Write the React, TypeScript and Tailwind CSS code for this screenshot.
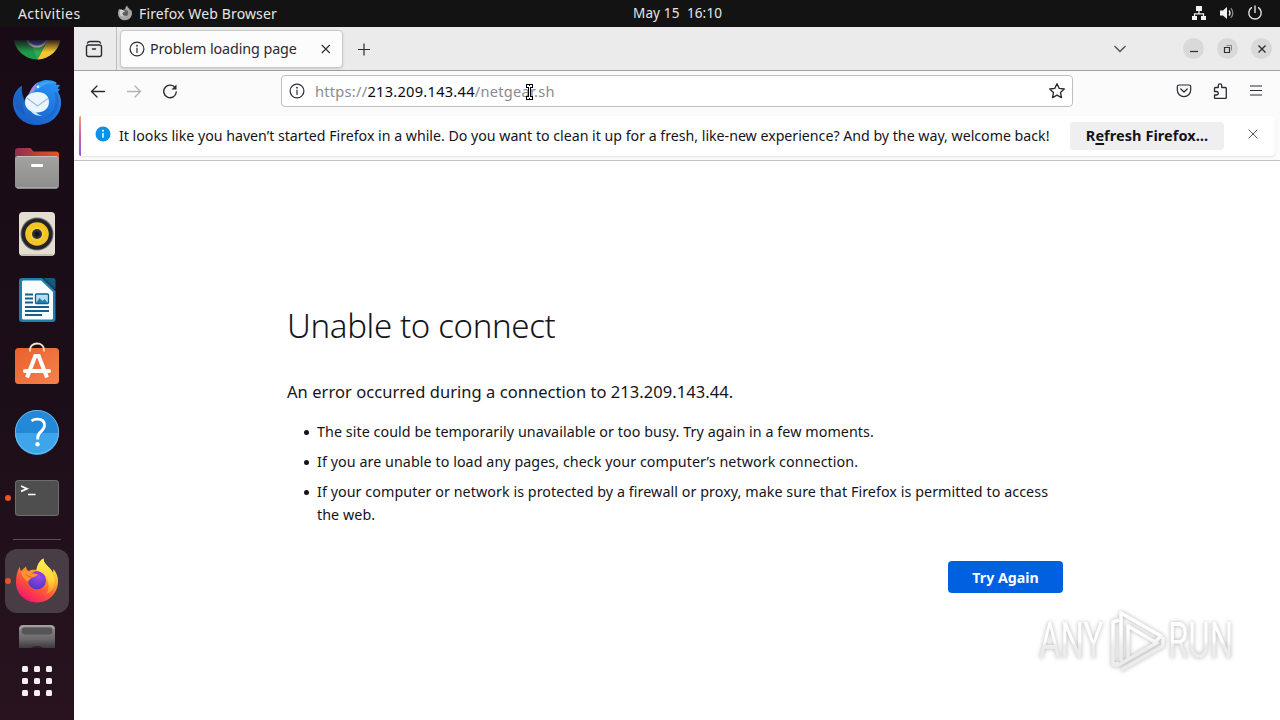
import type { ReactNode } from "react";

interface DockItemProps {
  children: ReactNode;
  running?: boolean;
}

function DockItem({ children, running = false }: DockItemProps) {
  return (
    <div className="relative flex h-[66px] w-full shrink-0 items-center justify-center">
      {running && <span className="absolute top-[30px] left-[5px] h-1.5 w-1.5 rounded-full bg-[#e95420]" />}
      {children}
    </div>
  );
}

function ChromeIcon() {
  return (
    <svg width="48" height="20" viewBox="0 28 48 20">
      <defs>
        <linearGradient id="chromeFade" x1="0" y1="28" x2="0" y2="40" gradientUnits="userSpaceOnUse">
          <stop offset="0" stopColor="#1a0c17" stopOpacity="0.9" />
          <stop offset="1" stopColor="#1a0c17" stopOpacity="0" />
        </linearGradient>
      </defs>
      <circle cx="24" cy="24" r="23.5" fill="#1f9a4a" />
      <path d="M34 30 24.5 47.5A23.5 23.5 0 0 0 47.5 24L24 13z" fill="#f5c631" />
      <path d="M33.500 29.500 24.5 47.500 19 34z" fill="#35a853" />
      <circle cx="24" cy="24" r="11.500" fill="#e8eaf2" />
      <circle cx="24" cy="24" r="9.500" fill="#3a6fd0" />
      <rect y="28" width="48" height="12" fill="url(#chromeFade)" />
    </svg>
  );
}

function ThunderbirdIcon() {
  return (
    <svg width="48" height="48" viewBox="0 0 48 48">
      <defs>
        <linearGradient id="tbBody" x1="0.8" y1="0" x2="0.3" y2="1">
          <stop offset="0" stopColor="#2b93f5" />
          <stop offset="0.5" stopColor="#1f78e0" />
          <stop offset="1" stopColor="#1a5fc4" />
        </linearGradient>
      </defs>
      <path d="M9 8C4.500 9.500 0 17 0 24c0 13 10 23 23.500 23C38 47 48 37.500 48 24.500c0-4-1-7.500-3-10.500l2-3-2.500-.3L47 7l-4-.5.500-2C39 2 34 1.500 30 2.500 24 4 20 8 17.500 13c-2 4-5.500 6-6 10C9 18 8 13 9 8z" fill="url(#tbBody)" />
      <path d="M9 8c0 5 1 9 2.500 13-2 5-2 11 1 16C5 34 1 28 1 22 2 16 5 10.500 9 8z" fill="#1853b0" opacity="0.5" />
      <path d="M20 13c3-6 8-9.500 14-9.500 4 0 7 .5 9.500 1.800-5-.8-9 0-12.500 2-3.500 2.200-6 5-11 5.700z" fill="#53b4ff" opacity="0.55" />
      <path d="M16 16c2-6 5-9.500 9.500-12-3 4.500-4 7-4.500 9.500z" fill="#c58be8" opacity="0.8" />
      <circle cx="25" cy="8.800" r="1.300" fill="#e8f6ff" />
      <path d="M12 24.500C12 18 17.500 14 24.500 14S36 18 36 24c0 6.500-5.500 10.500-12 10.500S12 30.500 12 24.500z" fill="#eaf6ff" />
      <path d="M23 34c1 2 3 3 6 3.500-5 1-10-1.500-12-6z" fill="#d4ebfd" />
      <path d="m14 20 10.500 8 10.500-7.500" fill="none" stroke="#a4bdd2" strokeWidth="1.400" />
      <path d="M41 14c4 10 0 21-10 27 13-3 18-15 13-26z" fill="#1658bc" opacity="0.4" />
    </svg>
  );
}

function FilesIcon() {
  return (
    <svg width="48" height="48" viewBox="0 0 48 48">
      <defs>
        <linearGradient id="folderBack" x1="0" x2="1">
          <stop offset="0" stopColor="#8e2e50" />
          <stop offset="1" stopColor="#e95420" />
        </linearGradient>
        <linearGradient id="folderFront" x1="0" y1="0" x2="0" y2="1">
          <stop offset="0" stopColor="#a3a3a1" />
          <stop offset="1" stopColor="#8d8d8b" />
        </linearGradient>
      </defs>
      <path d="M5 4h12.500l3 3.500H43a3 3 0 0 1 3 3V24H2V7a3 3 0 0 1 3-3z" fill="url(#folderBack)" />
      <rect x="2" y="12" width="44" height="32.500" rx="3" fill="url(#folderFront)" />
      <path d="M4 12.500h40M4 44h40" stroke="#c2c2c0" />
      <rect x="18" y="20" width="12" height="3" rx="1" fill="#fff" />
    </svg>
  );
}

function RhythmboxIcon() {
  return (
    <svg width="48" height="48" viewBox="0 0 48 48">
      <rect x="6" y="2" width="36" height="44" rx="4" fill="#e3ddd2" />
      <path d="M8 45h32" stroke="#bdb6a8" strokeWidth="1.500" />
      <circle cx="24" cy="24" r="16.500" fill="#77736d" />
      <circle cx="24" cy="24" r="15.500" fill="#23242a" />
      <circle cx="24" cy="24" r="11.800" fill="#f3c422" />
      <circle cx="24" cy="24" r="7" fill="#f7cf3c" />
      <circle cx="24" cy="24" r="5" fill="#2e3038" />
      <circle cx="24" cy="24" r="2.500" fill="#15161b" />
    </svg>
  );
}

function WriterIcon() {
  return (
    <svg width="48" height="48" viewBox="0 0 48 48">
      <path d="M9 2h20l13.500 13v28a3 3 0 0 1-3 3H9a3 3 0 0 1-3-3V5a3 3 0 0 1 3-3z" fill="#1e7fae" />
      <path d="M30 2h10a2.500 2.500 0 0 1 2.500 2.500V13z" fill="#155a84" />
      <path d="M31 2.500 42 13" stroke="#12496b" strokeWidth="1.500" />
      <path d="M10 4.500h18l12 11.500v26a1.500 1.500 0 0 1-1.500 1.500h-28A1.500 1.500 0 0 1 9 42V6a1.500 1.500 0 0 1 1-1.500z" fill="#fafdff" />
      <path d="M12 18.500h8M12 22.500h8M12 26.500h8M12 31h24M12 35h24M12 39h17" stroke="#155f8c" strokeWidth="1.800" />
      <rect x="22.500" y="18" width="13" height="9.500" rx="1" fill="#b8dcf2" stroke="#155f8c" strokeWidth="1.300" />
      <path d="m23 27 3.500-5 3 3 2-2 3.500 4z" fill="#1e7fae" />
    </svg>
  );
}

function SoftwareIcon() {
  return (
    <svg width="48" height="48" viewBox="0 0 48 48">
      <defs>
        <linearGradient id="bag" x1="0" y1="0" x2="1" y2="1">
          <stop offset="0" stopColor="#e9602c" />
          <stop offset="1" stopColor="#f4834f" />
        </linearGradient>
      </defs>
      <rect x="2" y="6" width="44" height="36" rx="3.500" fill="url(#bag)" />
      <path d="M17 9.500V8c0-4 3-6.500 7-6.500S31 4 31 8v1.500" fill="none" stroke="#f5e1d0" strokeWidth="1.800" />
      <path d="M22.500 13.500 14 35.500M25.500 13.500 34 35.500" stroke="#fff" strokeWidth="4" />
      <path d="M12 29h24" stroke="#fff" strokeWidth="4" strokeLinecap="round" />
      <path d="M21 12h6l1 3h-8z" fill="#fff" />
    </svg>
  );
}

function HelpIcon() {
  return (
    <svg width="48" height="48" viewBox="0 0 48 48">
      <circle cx="24" cy="24" r="22" fill="#2488d8" />
      <path d="M2 25a22 22 0 0 0 44 0z" fill="#3fa5ea" />
      <circle cx="24" cy="24" r="21.600" fill="none" stroke="#7cc2f0" strokeWidth="0.8" />
      <path d="M18.500 12.800c1.500-1 3.500-1.600 5.800-1.600 4.500 0 7.200 2.300 7.200 6 0 3-1.600 4.700-3.800 6.700-2.300 2-3 3.200-3 6v1.600" fill="none" stroke="#fff" strokeWidth="2.800" />
      <circle cx="24.500" cy="36.300" r="2.200" fill="#fff" />
    </svg>
  );
}

function TerminalIcon() {
  return (
    <svg width="48" height="48" viewBox="0 0 48 48">
      <rect x="2" y="6" width="44" height="36" rx="3.500" fill="#4e4e4e" />
      <rect x="2.500" y="6.500" width="43" height="35" rx="3" fill="none" stroke="#6d6d6d" />
      <path d="m8 12 6 2.700-6 2.700M15 20.500h7.500" fill="none" stroke="#fff" strokeWidth="1.700" />
    </svg>
  );
}

function FirefoxIcon() {
  return (
    <svg width="48" height="48" viewBox="0 0 48 48">
      <defs>
        <linearGradient id="fxFlame" x1="0.85" y1="0.1" x2="0.3" y2="1">
          <stop offset="0" stopColor="#fff14a" />
          <stop offset="0.35" stopColor="#ffa32e" />
          <stop offset="0.6" stopColor="#ff5a36" />
          <stop offset="1" stopColor="#f5156c" />
        </linearGradient>
        <linearGradient id="fxTail" x1="0" y1="0" x2="0" y2="1">
          <stop offset="0" stopColor="#fff250" />
          <stop offset="0.6" stopColor="#ffd33c" />
          <stop offset="1" stopColor="#ff8a2b" />
        </linearGradient>
        <radialGradient id="fxGlobe" cx="0.6" cy="0.2" r="0.8">
          <stop offset="0" stopColor="#a14cf0" />
          <stop offset="1" stopColor="#5136c4" />
        </radialGradient>
      </defs>
      <path d="M7 9.500c0 2 .3 3.500 1 4.500L13 9.500c.2 2 1 3.500 2.500 4.500 3-1.500 5-1.500 8-1C24.500 7 27 3.500 30.500 1.500c0 5 4 7 6.500 10 1.500 1.500 2.500 3 3 4.500l.5-4c3 4 5 8.500 4.500 13C44.500 37 35.500 45.500 24 45.500S3 37 3 25.500C3 19 4 14 7 9.500z" fill="url(#fxFlame)" />
      <path d="M23.500 13C24.500 7 27 3.500 30.500 1.500c0 5 4 7 6.500 10 4 5 6 12 4 18-1.500 3.500-4 6-7.500 7.500 3-5 3-12-.5-16.500-2-2.700-6.500-3.500-9.500-7.500z" fill="url(#fxTail)" />
      <circle cx="24" cy="23.500" r="9" fill="url(#fxGlobe)" />
      <path d="M21 14.500c4-1 9 .5 12 6l-3-1.500 1 2.500c-3-3.500-6-4-10-4z" fill="#8c3fe0" />
      <path d="M8 14.500c4-1.500 8-.5 11 2 2 0 4.500.2 6 .8-1.500 2.200-3.500 2.700-5.500 3.200-1.500 1-3.500 2-4.500 4-3-1-6-5-7-10z" fill="#ff9233" />
      <path d="M12 16.500c3 2.500 6 3.500 9 3.800l-1.500.7c-3-.2-6-1.500-7.500-4.500z" fill="#ff5a36" />
    </svg>
  );
}

function DriveIcon() {
  return (
    <svg width="48" height="23" viewBox="0 0 48 23">
      <defs>
        <linearGradient id="drive" x1="0" y1="0" x2="0" y2="1">
          <stop offset="0" stopColor="#8f8f8f" />
          <stop offset="0.6" stopColor="#6c6a6c" />
          <stop offset="1" stopColor="#3d383c" />
        </linearGradient>
      </defs>
      <path d="M6 23V4a4 4 0 0 1 4-4h28a4 4 0 0 1 4 4v19z" fill="url(#drive)" />
      <path d="M7 4a3.500 3.500 0 0 1 3-3h28a3.500 3.500 0 0 1 3 3" fill="none" stroke="#b3b3b3" />
      <rect x="8.500" y="2.500" width="31" height="7" rx="3.500" fill="#555" />
      <path d="M18 23c1.500-2.800 10.500-2.800 12 0z" fill="#29242a" />
    </svg>
  );
}

function Dock() {
  return (
    <aside className="flex w-[74px] shrink-0 flex-col items-center bg-linear-to-b from-[#190b16] via-[#1b0e18] to-[#28131f] pt-[13px]">
      <div className="h-[29px] shrink-0">
        <ChromeIcon />
      </div>
      <DockItem><ThunderbirdIcon /></DockItem>
      <DockItem><FilesIcon /></DockItem>
      <DockItem><RhythmboxIcon /></DockItem>
      <DockItem><WriterIcon /></DockItem>
      <DockItem><SoftwareIcon /></DockItem>
      <DockItem><HelpIcon /></DockItem>
      <DockItem running><TerminalIcon /></DockItem>
      <div className="mt-2 mb-[9px] h-px w-12 shrink-0 bg-[#5a5058]" />
      <div className="relative flex h-16 w-16 shrink-0 items-center justify-center rounded-xl bg-[#483c45]">
        <span className="absolute top-[29px] left-0 h-1.5 w-1.5 rounded-full bg-[#e95420]" />
        <FirefoxIcon />
      </div>
      <div className="mt-3 h-[23px] shrink-0">
        <DriveIcon />
      </div>
      <div className="mt-[18px] grid grid-cols-3 gap-1.5">
        {[...Array(9)].map((_, i) => (
          <span key={i} className="h-1.5 w-1.5 rounded-[1.5px] bg-[#f5eef3]" />
        ))}
      </div>
    </aside>
  );
}

function InfoIcon() {
  return (
    <svg width="16" height="16" viewBox="0 0 16 16" fill="none" stroke="currentColor" strokeWidth="1.200">
      <circle cx="8" cy="8" r="6.900" />
      <path d="M8 7v4.500" strokeLinecap="round" />
      <circle cx="8" cy="4.700" r="0.900" fill="currentColor" stroke="none" />
    </svg>
  );
}

function TopBar() {
  return (
    <header className="flex h-[27px] items-center bg-[#131313] text-[13.500px] text-[#e6e6e6]">
      <span className="w-[100px] shrink-0 pb-px pl-[18px] text-[14px] tracking-[0.42px]">Activities</span>
      <div className="flex w-[533px] shrink-0 items-center pb-px pl-[17px]">
        <svg width="16" height="16" viewBox="0 0 48 48" className="mr-[6px]">
          <path d="M7.500 10.500 9 15l4-4 2.500 4.500c3-2 6-2.500 9-2C24.500 8 27 4 30.500 1.500c0 5 4 7 6.500 10l3 5 1-4c3 4 4.500 9 4 14C44 37.500 35 46 24 46 12 46 3 37 3 25.500c0-6 1.500-11 4.500-15z" fill="#a5a5a5" />
          <circle cx="25" cy="24" r="9" fill="#5f5f5f" />
          <path d="M9 15c4-2 8-1 11 2l6 1-6 3-4.500 4c.5 4.500 4.500 8 9 8-6 3-14 0-16-7z" fill="#cfcfcf" />
        </svg>
        <span className="text-[14px] tracking-[0.130px]">Firefox Web Browser</span>
      </div>
      <span className="tracking-[0.150px] whitespace-pre">May 15  16:10</span>
      <div className="ml-auto flex items-center gap-3 pr-[17.500px] pb-px">
        <svg width="16" height="16" viewBox="0 0 16 16" fill="#f2f2f2">
          <path d="M5 1h6v5H5zM1 11h5v4H1zM10 11h5v4h-5z" />
          <path d="M8 6v3M3.500 11V8.800h9V11" fill="none" stroke="#f2f2f2" strokeWidth="1.200" />
        </svg>
        <svg width="16" height="16" viewBox="0 0 16 16" fill="none">
          <path d="M1 5.500h3L8 2v12l-4-3.500H1z" fill="#f2f2f2" />
          <path d="M10 5.500c1.300 1.500 1.300 3.500 0 5" stroke="#f2f2f2" strokeWidth="1.300" />
          <path d="M11.800 3.200c2.700 2.800 2.700 6.800 0 9.600" stroke="#8a8a8a" strokeWidth="1.300" />
        </svg>
        <svg width="16" height="16" viewBox="0 0 16 16" fill="none" stroke="#e2e2e2" strokeWidth="1.400" strokeLinecap="round">
          <path d="M4.500 2.700a6.200 6.200 0 1 0 7 0M8 1v6.500" />
        </svg>
      </div>
    </header>
  );
}

function TabStrip() {
  return (
    <div className="flex h-11 shrink-0 items-center border-b border-[#a2a2a4] bg-[#ebebeb] text-[#2b2a33]">
      <div className="flex h-full w-[43px] items-center justify-center border-r border-[#bdbdbf] pr-[3px]">
        <svg width="18" height="18" viewBox="0 0 18 18" fill="none" stroke="currentColor" strokeWidth="1.400" strokeLinecap="round">
          <rect x="1.500" y="5" width="15" height="11.500" rx="2" />
          <path d="M2.500 3C3 1.700 4 1.500 5 1.500h8c1 0 2 .2 2.500 1.500M7.500 9h3" />
        </svg>
      </div>
      <div className="ml-[3px] flex h-[38px] w-[223px] items-center rounded-[4px] border border-[#c9c9cc] bg-[#fcfcfc] pl-[7.500px] text-[14.300px] shadow-sm">
        <InfoIcon />
        <span className="ml-[5.500px] w-[164px] pt-px tracking-[-0.080px]">Problem loading page</span>
        <svg width="24" height="24" viewBox="0 0 24 24" fill="none" stroke="currentColor" strokeWidth="1.100">
          <path d="m7.800 8 8 8M15.800 8l-8 8" />
        </svg>
      </div>
      <svg width="16" height="16" viewBox="0 0 16 16" className="ml-[13px]" fill="none" stroke="currentColor" strokeWidth="1.200">
        <path d="M8 2.500v12M2 8.500h12" />
      </svg>
      <div className="ml-auto flex items-center pr-2">
        <svg width="16" height="16" viewBox="0 0 16 16" className="mr-[55px]" fill="none" stroke="#4c4c52" strokeWidth="1.300">
          <path d="m2.500 5 5.500 5.500L13.500 5" />
        </svg>
        <div className="flex gap-[13px] text-[#2e2e2e]">
          <span className="flex h-[21px] w-[21px] items-center justify-center rounded-full bg-[#d9d9d9]">
            <svg width="10" height="10" viewBox="0 0 10 10"><path d="M1 7.500h8" stroke="currentColor" strokeWidth="1.200" /></svg>
          </span>
          <span className="flex h-[21px] w-[21px] items-center justify-center rounded-full bg-[#d9d9d9]">
            <svg width="10" height="10" viewBox="0 0 10 10" fill="none" stroke="currentColor"><path d="M1.500 3.500h5v5h-5z" strokeWidth="1.200" /><path d="M3.500 1.500h5v5" strokeWidth="0.800" opacity="0.600" /></svg>
          </span>
          <span className="flex h-[21px] w-[21px] items-center justify-center rounded-full bg-[#d9d9d9]">
            <svg width="10" height="10" viewBox="0 0 10 10"><path d="m1.500 1.500 7 7M8.500 1.500l-7 7" stroke="currentColor" strokeWidth="1.400" /></svg>
          </span>
        </div>
      </div>
    </div>
  );
}

function NavBar() {
  return (
    <div className="flex h-10 shrink-0 items-center text-[#2b2a33]">
      <div className="flex w-[207px] items-center gap-5 pl-4">
        <svg width="16" height="16" viewBox="0 0 16 16" fill="none" stroke="currentColor" strokeWidth="1.300" strokeLinecap="round" strokeLinejoin="round">
          <path d="M14.500 8.500h-13M7 3 1.500 8.500 7 14" />
        </svg>
        <svg width="16" height="16" viewBox="0 0 16 16" fill="none" stroke="#b3b3b7" strokeWidth="1.300" strokeLinecap="round" strokeLinejoin="round">
          <path d="M1.500 8.500h13M9 3l5.500 5.500L9 14" />
        </svg>
        <svg width="16" height="16" viewBox="0 0 16 16" fill="none" stroke="currentColor" strokeWidth="1.400" strokeLinecap="round">
          <path d="M13.500 5.300A6.300 6.300 0 1 0 14.300 9" />
          <path d="M14.500 1.500v5h-5z" fill="currentColor" stroke="none" />
        </svg>
      </div>
      <div className="relative flex h-8 w-[792px] items-center rounded-[4px] border border-[#bfbfc3] bg-white px-[7px]">
        <InfoIcon />
        <span className="ml-[10px] pt-px text-[14.600px] tracking-[0.270px] text-[#8a8a8f]">
          https://<span className="text-[#0b0a10]">213.209.143.44</span>/netgear.sh
        </span>
        <svg width="18" height="18" viewBox="0 0 18 18" className="ml-auto -mr-px" fill="none" stroke="currentColor" strokeWidth="1.300" strokeLinejoin="round">
          <path d="m9 1.700 2.200 4.700 5.100.6-3.800 3.500 1 5.100L9 13.100l-4.500 2.500 1-5.100L1.700 7l5.100-.6z" />
        </svg>
        {/* I-beam pointer */}
        <svg width="9" height="16" viewBox="0 0 9 16" className="absolute top-[8px] left-[243px]" shapeRendering="crispEdges">
          <path d="M1 0h7v4H6v8h2v4H1v-4h2V4H1z" fill="#000" />
          <path d="M2 1h5v2H5v10h2v2H2v-2h2V3H2z" fill="#fff" />
          <path d="M4 1h1v1H4zM4 14h1v1H4z" fill="#000" />
        </svg>
      </div>
      <div className="ml-auto flex items-center gap-5 pr-4">
        <svg width="16" height="16" viewBox="0 0 16 16" fill="none" stroke="currentColor" strokeWidth="1.200" strokeLinecap="round" strokeLinejoin="round">
          <path d="M3 2h10a1.700 1.700 0 0 1 1.700 1.700V7a6.700 6.700 0 0 1-13.400 0V3.700A1.700 1.700 0 0 1 3 2z" />
          <path d="M4.800 6 8 9l3.200-3" />
        </svg>
        <svg width="16" height="16" viewBox="0 0 16 16" fill="none" stroke="currentColor" strokeWidth="1.300" strokeLinejoin="round">
          <path d="M6.300 4.500V2.500a1.700 1.700 0 0 1 3.400 0v2h3.600a1 1 0 0 1 1 1v9a1 1 0 0 1-1 1H3.500a1 1 0 0 1-1-1V12h2a1.700 1.700 0 0 0 0-3.500h-2v-3a1 1 0 0 1 1-1z" />
        </svg>
        <svg width="16" height="16" viewBox="0 0 16 16" stroke="currentColor" strokeWidth="1.200">
          <path d="M2 3h12M2 7.500h12M2 12h12" />
        </svg>
      </div>
    </div>
  );
}

function RefreshNotice() {
  return (
    <div className="flex h-[50px] shrink-0 border-b border-[#c3c3c5] px-[5px] pt-[5px] pb-1">
      <div className="flex flex-1 items-center rounded-[4px] bg-white shadow-[0_1px_2px_rgba(0,0,0,0.1)]">
        <div className="h-full w-0.5 rounded-l bg-linear-to-b from-[#f79a62] via-[#d05aa8] to-[#9059d6]" />
        <svg width="16" height="16" viewBox="0 0 16 16" className="mb-1 ml-[14px]">
          <circle cx="8" cy="8" r="7.500" fill="#0a92e8" />
          <path d="M8 7v4.700" stroke="#fff" strokeWidth="1.500" />
          <circle cx="8" cy="4.700" r="1" fill="#fff" />
        </svg>
        <p className="ml-2 w-[951px] text-[14.200px] tracking-[-0.010px] whitespace-nowrap text-[#15141a]">
          It looks like you haven’t started Firefox in a while. Do you want to clean it up for a fresh, like-new experience? And by the way, welcome back!
        </p>
        <button className="h-7 w-[154px] rounded-[4px] bg-[#efeff1] text-[14.500px] font-bold tracking-[0.060px] text-[#15141a]">
          R<span className="underline decoration-2 underline-offset-2">e</span>fresh Firefox…
        </button>
        <svg width="12" height="12" viewBox="0 0 12 12" className="mb-1 ml-[23px]" stroke="#5b5b66" strokeWidth="1">
          <path d="m1.700 1.700 8.600 8.600M10.300 1.700l-8.600 8.600" />
        </svg>
      </div>
    </div>
  );
}

function Watermark() {
  return (
    <div className="absolute top-[607px] left-[1039px] flex h-[68px] items-center text-[50px] leading-none text-transparent [filter:drop-shadow(0_0_2px_rgba(0,0,0,0.3))]">
      <span className="-mr-[30px] w-[100px] origin-left scale-x-[0.66] bg-linear-to-b from-white from-50% to-[#ececec] to-60% bg-clip-text font-[Roboto]">ANY</span>
      <svg width="56" height="64" viewBox="0 0 56 64" fill="none" strokeWidth="3.500" strokeLinejoin="round">
        <defs>
          <linearGradient id="markFade" x1="0" y1="24" x2="0" y2="40" gradientUnits="userSpaceOnUse">
            <stop offset="0" stopColor="#fff" />
            <stop offset="1" stopColor="#ececec" />
          </linearGradient>
        </defs>
        <g stroke="url(#markFade)">
          <path d="M10 11 4 13v43l6-2M12 14v38M12 19V4l40 23-6 6L19 17v32" />
          <path d="m6 57 5-2 38-22M12 61l42-24V28" />
        </g>
      </svg>
      <span className="ml-[3px] w-[98px] origin-left scale-x-[0.66] bg-linear-to-b from-white from-50% to-[#ececec] to-60% bg-clip-text font-[Roboto]">RUN</span>
    </div>
  );
}

function ErrorPage() {
  return (
    <main className="flex-1 bg-white pt-[142px] pl-[213px] text-[#15141a]">
      <div className="w-[776px]">
        <h1 className="h-[46px] text-[33px] leading-[46px] font-light tracking-[-0.350px]">Unable to connect</h1>
        <p className="mt-[31px] text-[16.500px] leading-6 tracking-[0.050px]">An error occurred during a connection to 213.209.143.44.</p>
        <ul className="mt-4 space-y-[7px] pr-2 pl-[30px] text-[14.300px] leading-[23px] tracking-[0.060px]">
          {[
            "The site could be temporarily unavailable or too busy. Try again in a few moments.",
            "If you are unable to load any pages, check your computer’s network connection.",
            "If your computer or network is protected by a firewall or proxy, make sure that Firefox is permitted to access the web.",
          ].map((text) => (
            <li key={text} className="relative before:absolute before:top-[10px] before:-left-[13px] before:h-[5px] before:w-[5px] before:rounded-full before:bg-[#15141a]">
              {text}
            </li>
          ))}
        </ul>
        <div className="mt-[35px] flex justify-end">
          <button className="h-8 w-[115px] rounded-[4px] bg-[#0061e0] pt-px text-[14.200px] font-bold text-[#fbfbfe]">Try Again</button>
        </div>
      </div>
    </main>
  );
}

export default function App() {
  return (
    <div className="relative flex h-[720px] w-[1280px] flex-col overflow-hidden font-['Noto_Sans',sans-serif]">
      <TopBar />
      <div className="flex min-h-0 flex-1">
        <Dock />
        <div className="flex min-w-0 flex-1 flex-col bg-[#fbfbfb]">
          <TabStrip />
          <NavBar />
          <RefreshNotice />
          <ErrorPage />
        </div>
      </div>
      <Watermark />
    </div>
  );
}
